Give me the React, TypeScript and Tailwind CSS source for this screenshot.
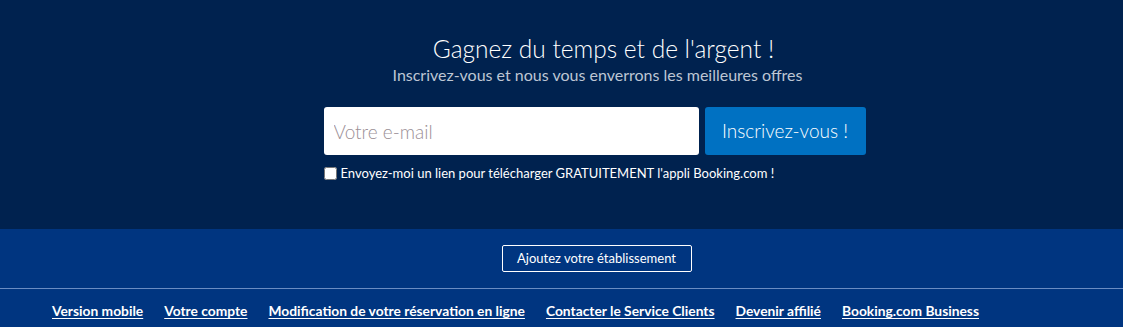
export default function App() {
  const links = [
    "Version mobile",
    "Votre compte",
    "Modification de votre réservation en ligne",
    "Contacter le Service Clients",
    "Devenir affilié",
    "Booking.com Business",
  ];

  return (
    <div className="w-[1123px] h-[327px] overflow-hidden font-['Lato','Noto_Sans',sans-serif] text-white">
      {/* Newsletter */}
      <section className="h-[229px] bg-[#00224f] flex flex-col items-center pl-[66px] pt-[33px]">
        <h2 className="text-[24.5px] leading-[32px] font-light pl-[18px]">Gagnez du temps et de l'argent !</h2>
        <p className="text-[16px] leading-[20px] text-[#bdc6d4] pl-[6px]">
          Inscrivez-vous et nous vous enverrons les meilleures offres
        </p>
        <div className="mt-[22px] w-[542px]">
          <form className="flex gap-[6px]" onSubmit={(e) => e.preventDefault()}>
            <input
              type="email"
              placeholder="Votre e-mail"
              className="w-[375px] h-[48px] rounded-[3px] bg-white px-[10px] text-[19px] font-light text-[#333] placeholder:text-[#9b8f96] outline-none"
            />
            <button className="w-[161px] h-[48px] rounded-[3px] bg-[#0071c2] text-[19px] font-light text-white">
              Inscrivez-vous !
            </button>
          </form>
          <label className="mt-[10px] flex items-center gap-[4px] text-[13px] leading-[16px]">
            <input type="checkbox" className="w-[13px] h-[13px] m-0 accent-white" />
            <span>Envoyez-moi un lien pour télécharger GRATUITEMENT l'appli Booking.com !</span>
          </label>
        </div>
      </section>

      {/* Footer nav */}
      <section className="bg-[#003580] h-[98px]">
        <div className="flex justify-center pl-[70px] pt-[16px] h-[59px]">
          <a
            href="#"
            className="h-[27px] w-[190px] flex items-center justify-center border border-white rounded-[2px] text-[13px] text-white"
          >
            Ajoutez votre établissement
          </a>
        </div>
        <div className="border-t border-[#6a8cc2]" />
        <ul className="flex gap-[21px] pl-[52px] pt-[9px]">
          {links.map((l) => (
            <li key={l}>
              <a href="#" className="text-[13.8px] font-bold underline underline-offset-2 text-white">
                {l}
              </a>
            </li>
          ))}
        </ul>
      </section>
    </div>
  );
}
